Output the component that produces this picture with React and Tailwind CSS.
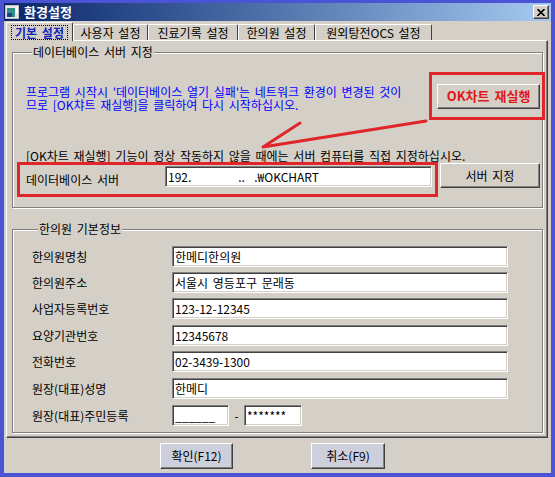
import React from "react";

const raised =
  "border border-t-white border-l-white border-r-[#404040] border-b-[#404040] shadow-[inset_-1px_-1px_0_#808080]";
const sunken =
  "bg-white border border-t-[#808080] border-l-[#808080] border-r-white border-b-white shadow-[inset_1px_1px_0_#404040,inset_-1px_-1px_0_#d4d0c8]";
const group =
  "border border-[#808080] shadow-[inset_1px_1px_0_#fff,1px_1px_0_#fff]";

const tabs = [
  { label: "사용자 설정", w: "w-[75px]" },
  { label: "진료기록 설정", w: "w-[90px]" },
  { label: "한의원 설정", w: "w-[77px]" },
  { label: "원외탕전OCS 설정", w: "w-[117px]" },
];

// 한의원 기본정보 rows (mt keeps the 26.5px pitch of the original)
const clinicRows = [
  { label: "한의원명칭", value: "한메디한의원", mt: "mt-0" },
  { label: "한의원주소", value: "서울시 영등포구 문래동", mt: "mt-[5px]" },
  { label: "사업자등록번호", value: "123-12-12345", mt: "mt-[5px]" },
  { label: "요양기관번호", value: "12345678", mt: "mt-[6px]" },
  { label: "전화번호", value: "02-3439-1300", mt: "mt-[5px]" },
  { label: "원장(대표)성명", value: "한메디", mt: "mt-[6px]" },
];

function Field({ value, className = "" }) {
  return (
    <div
      className={`${sunken} h-[21px] pl-[2px] flex items-center whitespace-pre overflow-hidden ${className}`}
    >
      {value}
    </div>
  );
}

function Legend({ children }) {
  return (
    <legend className="ml-[6px] px-[1px] h-[14px] leading-[14px] bg-[#d4d0c8]">
      {children}
    </legend>
  );
}

export default function App() {
  return (
    <div className="relative w-[555px] h-[477px] bg-[#4b54d4] pt-[3px] pl-[4px] pr-[4px] pb-[4px] flex flex-col text-[12px] leading-[12px] text-black font-['Liberation_Sans_Narrow','Noto_Sans_CJK_KR',sans-serif] [word-spacing:2px] overflow-hidden">
      {/* title bar */}
      <div className="h-[18px] flex items-center bg-gradient-to-r from-[#0a246a] to-[#a6caf0] pl-[1px] pr-[1px]">
        <svg width="14" height="14" viewBox="0 0 14 14" className="shrink-0">
          <rect x="0.5" y="0.5" width="13" height="13" fill="#e8e8e8" stroke="#c0c0c0" />
          <rect x="2" y="3" width="8" height="9" fill="#2f8f86" />
          <rect x="2" y="8" width="5" height="4" fill="#1d3f8a" />
          <rect x="11" y="2" width="2" height="6" fill="#ffffff" />
        </svg>
        <span className="ml-[5px] text-white font-bold text-[13px]">환경설정</span>
        <div className={`${raised} bg-[#d4d0c8] ml-auto mr-[1px] w-[16px] h-[14px] flex items-center justify-center`}>
          <svg width="8" height="7" viewBox="0 0 8 7">
            <path d="M0.5 0 L7.5 7 M7.5 0 L0.5 7" stroke="#000" strokeWidth="1.6" />
          </svg>
        </div>
      </div>

      {/* dialog body */}
      <div className="flex-1 bg-[#d4d0c8] pl-[2px] pr-[3px] flex flex-col">
        {/* tabs */}
        <div className="h-[19px] flex items-end">
          <div className="relative z-10 w-[67px] h-[19px] mb-[-1px] bg-[#d4d0c8] border-t border-l border-r border-t-white border-l-white border-r-[#404040] rounded-t-[2px] flex items-start justify-center pt-[2px]">
            <span className="border border-dotted border-black px-[3px] h-[15px] leading-[13px] font-bold text-[#1325b8]">
              기본 설정
            </span>
          </div>
          {tabs.map((t) => (
            <div
              key={t.label}
              className={`${t.w} h-[16px] border-t border-l border-r border-t-white border-l-white border-r-[#404040] rounded-t-[2px] flex items-center justify-center`}
            >
              {t.label}
            </div>
          ))}
        </div>

        {/* tab page */}
        <div className={`${raised} h-[398px] flex flex-col`}>
          {/* 데이터베이스 서버 지정 */}
          <fieldset className={`${group} mt-[4px] ml-[5px] mr-[4px] pl-[13px] pb-[10px]`}>
            <Legend>데이터베이스 서버 지정</Legend>
            <div className="mt-[13px] flex items-center">
              <div className="pt-[4px] text-[#0000ff] whitespace-nowrap leading-[13px]">
                <div>프로그램 시작시 '데이터베이스 열기 실패'는 네트워크 환경이 변경된 것이</div>
                <div>므로 [OK챠트 재실행]을 클릭하여 다시 시작하십시오.</div>
              </div>
              <div className="ml-auto mr-[-3px] w-[116px] h-[48px] border-[3px] border-[#e0262b] flex items-center pl-[5px]">
                <div className={`${raised} bg-[#d4d0c8] w-[103px] h-[25px] flex items-center justify-center font-bold text-[#e01818] text-[13px]`}>
                  OK차트 재실행
                </div>
              </div>
            </div>
            <div className="mt-[30px] whitespace-nowrap">
              [OK차트 재실행] 기능이 정상 작동하지 않을 때에는 서버 컴퓨터를 직접 지정하십시오.
            </div>
            <div className="flex items-start">
              <div className="ml-[-9px] w-[421px] h-[35px] border-[3px] border-[#e0262b] flex items-start pl-[6px]">
                <div className="w-[139px] h-[29px] flex items-center">데이터베이스 서버</div>
                <Field className="w-[267px] mt-[1px]" value={"192.          ..  .₩OKCHART"} />
              </div>
              <div className={`${raised} bg-[#d4d0c8] ml-[2px] mt-[1px] w-[100px] h-[25px] flex items-center justify-center`}>
                서버 지정
              </div>
            </div>
          </fieldset>

          {/* 한의원 기본정보 */}
          <fieldset className={`${group} mt-[14px] ml-[5px] mr-[4px] pl-[19px] pb-[6px]`}>
            <Legend>한의원 기본정보</Legend>
            <div className="mt-[10px] flex flex-col">
              {clinicRows.map((r) => (
                <div key={r.label} className={`${r.mt} flex items-center`}>
                  <div className="w-[140px]">{r.label}</div>
                  <Field className="w-[336px]" value={r.value} />
                </div>
              ))}
              <div className="mt-[6px] flex items-center">
                <div className="w-[140px]">원장(대표)주민등록</div>
                <Field className="w-[57px]" value="______" />
                <div className="w-[15px] text-center">-</div>
                <Field className="w-[58px]" value="*******" />
              </div>
            </div>
          </fieldset>
        </div>

        {/* bottom buttons */}
        <div className="mt-[5px] flex pl-[154px]">
          <div className={`${raised} bg-[#cdcfdc] w-[73px] h-[26px] flex items-center justify-center`}>
            확인(F12)
          </div>
          <div className={`${raised} bg-[#cdcfdc] ml-[78px] w-[74px] h-[26px] flex items-center justify-center`}>
            취소(F9)
          </div>
        </div>
      </div>

      {/* red annotation arrow */}
      <svg
        className="absolute left-0 top-0 pointer-events-none"
        width="555"
        height="477"
        viewBox="0 0 555 477"
      >
        <path
          d="M426 121 L263 147 M263 147 L300 123"
          stroke="#e0262b"
          strokeWidth="3"
          fill="none"
          strokeLinecap="round"
        />
      </svg>
    </div>
  );
}
